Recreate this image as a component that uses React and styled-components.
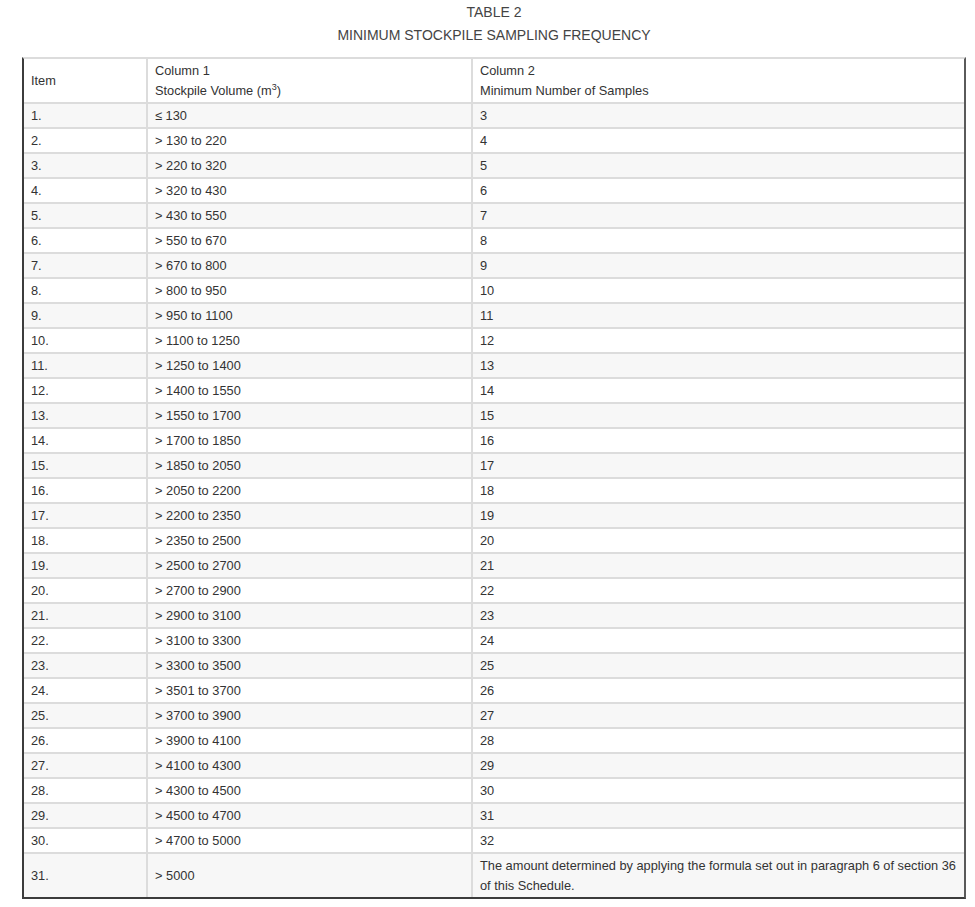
import React from "react";
import styled, { createGlobalStyle } from "styled-components";

const Global = createGlobalStyle`
  html, body { margin: 0; padding: 0; background: #fff; }
  body { font-family: "Liberation Sans", Arial, sans-serif; color: #333; }
`;

const Page = styled.div`
  padding: 0 9px 0 22px;
  width: 944px;
`;

const Caption = styled.div`
  text-align: center;
  font-size: 14px;
  color: #444;
  line-height: 23px;
  padding-top: 1px;
  padding-bottom: 10px;
`;

const Frame = styled.div`
  border-top: 2px solid #dcdcdc;
  border-left: 2px solid #3c3c3c;
  border-right: 2px solid #5a5a5a;
  border-bottom: 2px solid #3c3c3c;
`;

const Table = styled.table`
  width: 100%;
  border-collapse: collapse;
  table-layout: fixed;
  font-size: 12.8px;
  color: #333;
`;

const Row = styled.tr`
  background: ${(p) => (p.$shade ? "#f7f7f7" : "#fff")};
`;

const Cell = styled.td`
  padding: 2px 4px 1px 7px;
  line-height: 20px;
  vertical-align: middle;
  border-top: ${(p) => (p.$head ? "none" : "2px solid #dcdcdc")};
  border-left: ${(p) => (p.$first ? "none" : "2px solid #dcdcdc")};
  text-align: left;
  font-weight: normal;
`;

const Sup = styled.sup`
  font-size: 9px;
  line-height: 0;
`;

const rows = [
  ["1.", "≤ 130", "3"],
  ["2.", "> 130 to 220", "4"],
  ["3.", "> 220 to 320", "5"],
  ["4.", "> 320 to 430", "6"],
  ["5.", "> 430 to 550", "7"],
  ["6.", "> 550 to 670", "8"],
  ["7.", "> 670 to 800", "9"],
  ["8.", "> 800 to 950", "10"],
  ["9.", "> 950 to 1100", "11"],
  ["10.", "> 1100 to 1250", "12"],
  ["11.", "> 1250 to 1400", "13"],
  ["12.", "> 1400 to 1550", "14"],
  ["13.", "> 1550 to 1700", "15"],
  ["14.", "> 1700 to 1850", "16"],
  ["15.", "> 1850 to 2050", "17"],
  ["16.", "> 2050 to 2200", "18"],
  ["17.", "> 2200 to 2350", "19"],
  ["18.", "> 2350 to 2500", "20"],
  ["19.", "> 2500 to 2700", "21"],
  ["20.", "> 2700 to 2900", "22"],
  ["21.", "> 2900 to 3100", "23"],
  ["22.", "> 3100 to 3300", "24"],
  ["23.", "> 3300 to 3500", "25"],
  ["24.", "> 3501 to 3700", "26"],
  ["25.", "> 3700 to 3900", "27"],
  ["26.", "> 3900 to 4100", "28"],
  ["27.", "> 4100 to 4300", "29"],
  ["28.", "> 4300 to 4500", "30"],
  ["29.", "> 4500 to 4700", "31"],
  ["30.", "> 4700 to 5000", "32"],
  [
    "31.",
    "> 5000",
    "The amount determined by applying the formula set out in paragraph 6 of section 36 of this Schedule.",
  ],
];

export default function App() {
  return (
    <>
      <Global />
      <Page>
        <Caption>
          TABLE 2
          <br />
          MINIMUM STOCKPILE SAMPLING FREQUENCY
        </Caption>
        <Frame>
          <Table>
            <colgroup>
              <col style={{ width: "123px" }} />
              <col style={{ width: "325px" }} />
              <col />
            </colgroup>
            <thead>
              <Row>
                <Cell as="th" $head $first>
                  Item
                </Cell>
                <Cell as="th" $head>
                  Column 1
                  <br />
                  Stockpile Volume (m<Sup>3</Sup>)
                </Cell>
                <Cell as="th" $head>
                  Column 2
                  <br />
                  Minimum Number of Samples
                </Cell>
              </Row>
            </thead>
            <tbody>
              {rows.map((r, i) => (
                <Row key={r[0]} $shade={i % 2 === 0}>
                  <Cell $first>{r[0]}</Cell>
                  <Cell>{r[1]}</Cell>
                  <Cell>{r[2]}</Cell>
                </Row>
              ))}
            </tbody>
          </Table>
        </Frame>
      </Page>
    </>
  );
}
